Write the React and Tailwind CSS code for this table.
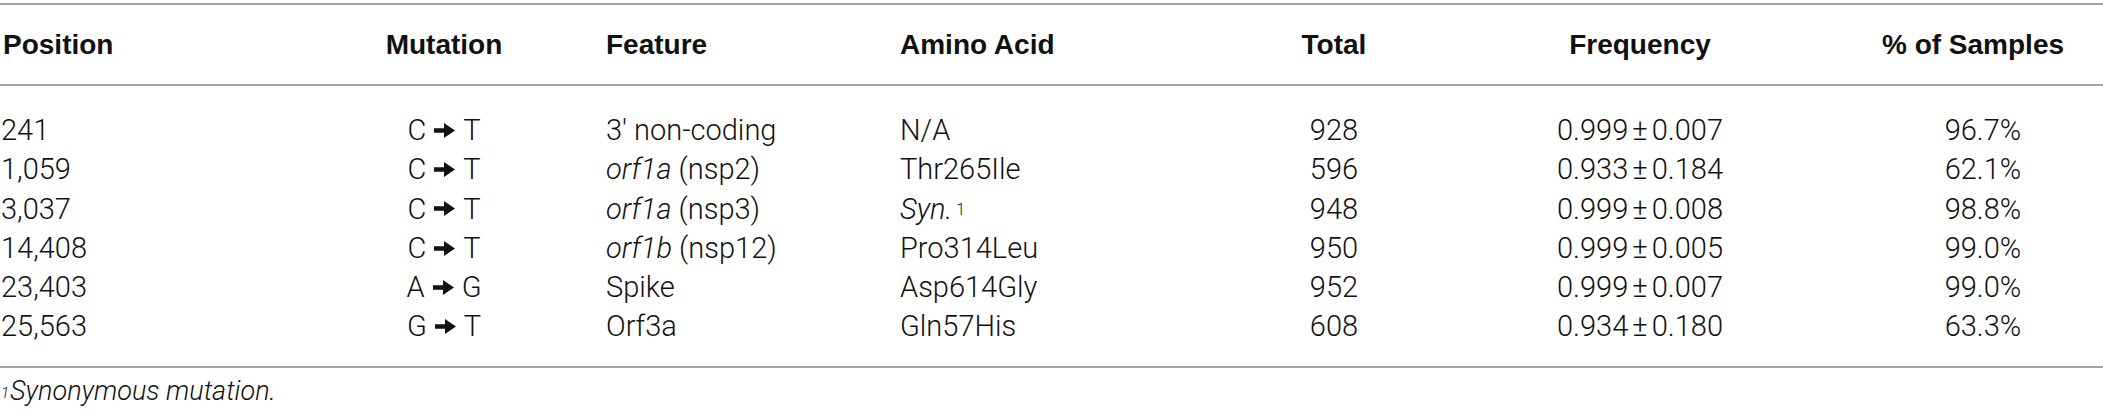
const rows = [
  { pos: '241', from: 'C', to: 'T', feature: <>3′ non-coding</>, aa: <>N/A</>, total: '928', freq: ['0.999', '0.007'], pct: '96.7%' },
  { pos: '1,059', from: 'C', to: 'T', feature: <><i>orf1a</i> (nsp2)</>, aa: <>Thr265Ile</>, total: '596', freq: ['0.933', '0.184'], pct: '62.1%' },
  { pos: '3,037', from: 'C', to: 'T', feature: <><i>orf1a</i> (nsp3)</>, aa: <><i>Syn.</i><sup className="text-[16px] ml-[4px] relative -top-[4px]">1</sup></>, total: '948', freq: ['0.999', '0.008'], pct: '98.8%' },
  { pos: '14,408', from: 'C', to: 'T', feature: <><i>orf1b</i> (nsp12)</>, aa: <>Pro314Leu</>, total: '950', freq: ['0.999', '0.005'], pct: '99.0%' },
  { pos: '23,403', from: 'A', to: 'G', feature: <>Spike</>, aa: <>Asp614Gly</>, total: '952', freq: ['0.999', '0.007'], pct: '99.0%' },
  { pos: '25,563', from: 'G', to: 'T', feature: <>Orf3a</>, aa: <>Gln57His</>, total: '608', freq: ['0.934', '0.180'], pct: '63.3%' },
];

const Arrow = () => (
  <svg className="inline-block mx-[8px] relative -top-[2px]" width="21" height="17" viewBox="0 0 21 17">
    <path d="M0 6.3 H10 V1 L21 8.5 L10 16 V10.7 H0 Z" fill="#111" />
  </svg>
);

const App = () => {
  const th = 'p-0 font-bold text-[28px] text-[#111] align-middle';

  return (
    <div className="w-[2103px] h-[417px] bg-white pt-[3px]" style={{ fontFamily: 'Roboto, "Liberation Sans", sans-serif' }}>
      <table className="w-full table-fixed border-collapse border-t-2 border-b-2 border-[#a3a3a3]">
        <thead>
          <tr className="h-[81px] border-b-2 border-[#a3a3a3]" style={{ fontFamily: '"Liberation Sans", Arial, sans-serif' }}>
            <th className={`${th} w-[288px] text-left pl-[3px]`}>Position</th>
            <th className={`${th} w-[312px] text-center`}>Mutation</th>
            <th className={`${th} w-[300px] text-left pl-[6px]`}>Feature</th>
            <th className={`${th} w-[300px] text-left`}>Amino Acid</th>
            <th className={`${th} w-[268px] text-center`}>Total</th>
            <th className={`${th} w-[344px] text-center`}>Frequency</th>
            <th className={`${th} w-[286px] text-center pl-[36px]`}>% of Samples</th>
            <th className={`${th} w-[5px]`}></th>
          </tr>
        </thead>
        <tbody className="text-[29px] font-light text-[#111] leading-[39.3px]">
          {rows.map((r, i) => {
            const pad = i === 0 ? 'pt-[25px]' : i === rows.length - 1 ? 'pb-[19px]' : '';
            return (
              <tr key={r.pos}>
                <td className={`p-0 pl-[1px] ${pad}`}>{r.pos}</td>
                <td className={`p-0 text-center ${pad}`}>
                  {r.from}<Arrow />{r.to}
                </td>
                <td className={`p-0 pl-[6px] whitespace-nowrap ${pad}`}>{r.feature}</td>
                <td className={`p-0 whitespace-nowrap ${pad}`}>{r.aa}</td>
                <td className={`p-0 text-center ${pad}`}>{r.total}</td>
                <td className={`p-0 text-center whitespace-nowrap ${pad}`}>
                  {r.freq[0]}<span className="mx-[4px]">±</span>{r.freq[1]}
                </td>
                <td className={`p-0 pl-[56px] text-center ${pad}`}>{r.pct}</td>
                <td className={`p-0 ${pad}`}></td>
              </tr>
            );
          })}
        </tbody>
      </table>
      <p className="pt-[8px] pl-[1px] text-[27px] font-light italic text-[#111] leading-[30px]">
        <sup className="text-[15px] relative -top-[2px] mr-[1px]">1</sup>Synonymous mutation.
      </p>
    </div>
  );
};

export default App;
